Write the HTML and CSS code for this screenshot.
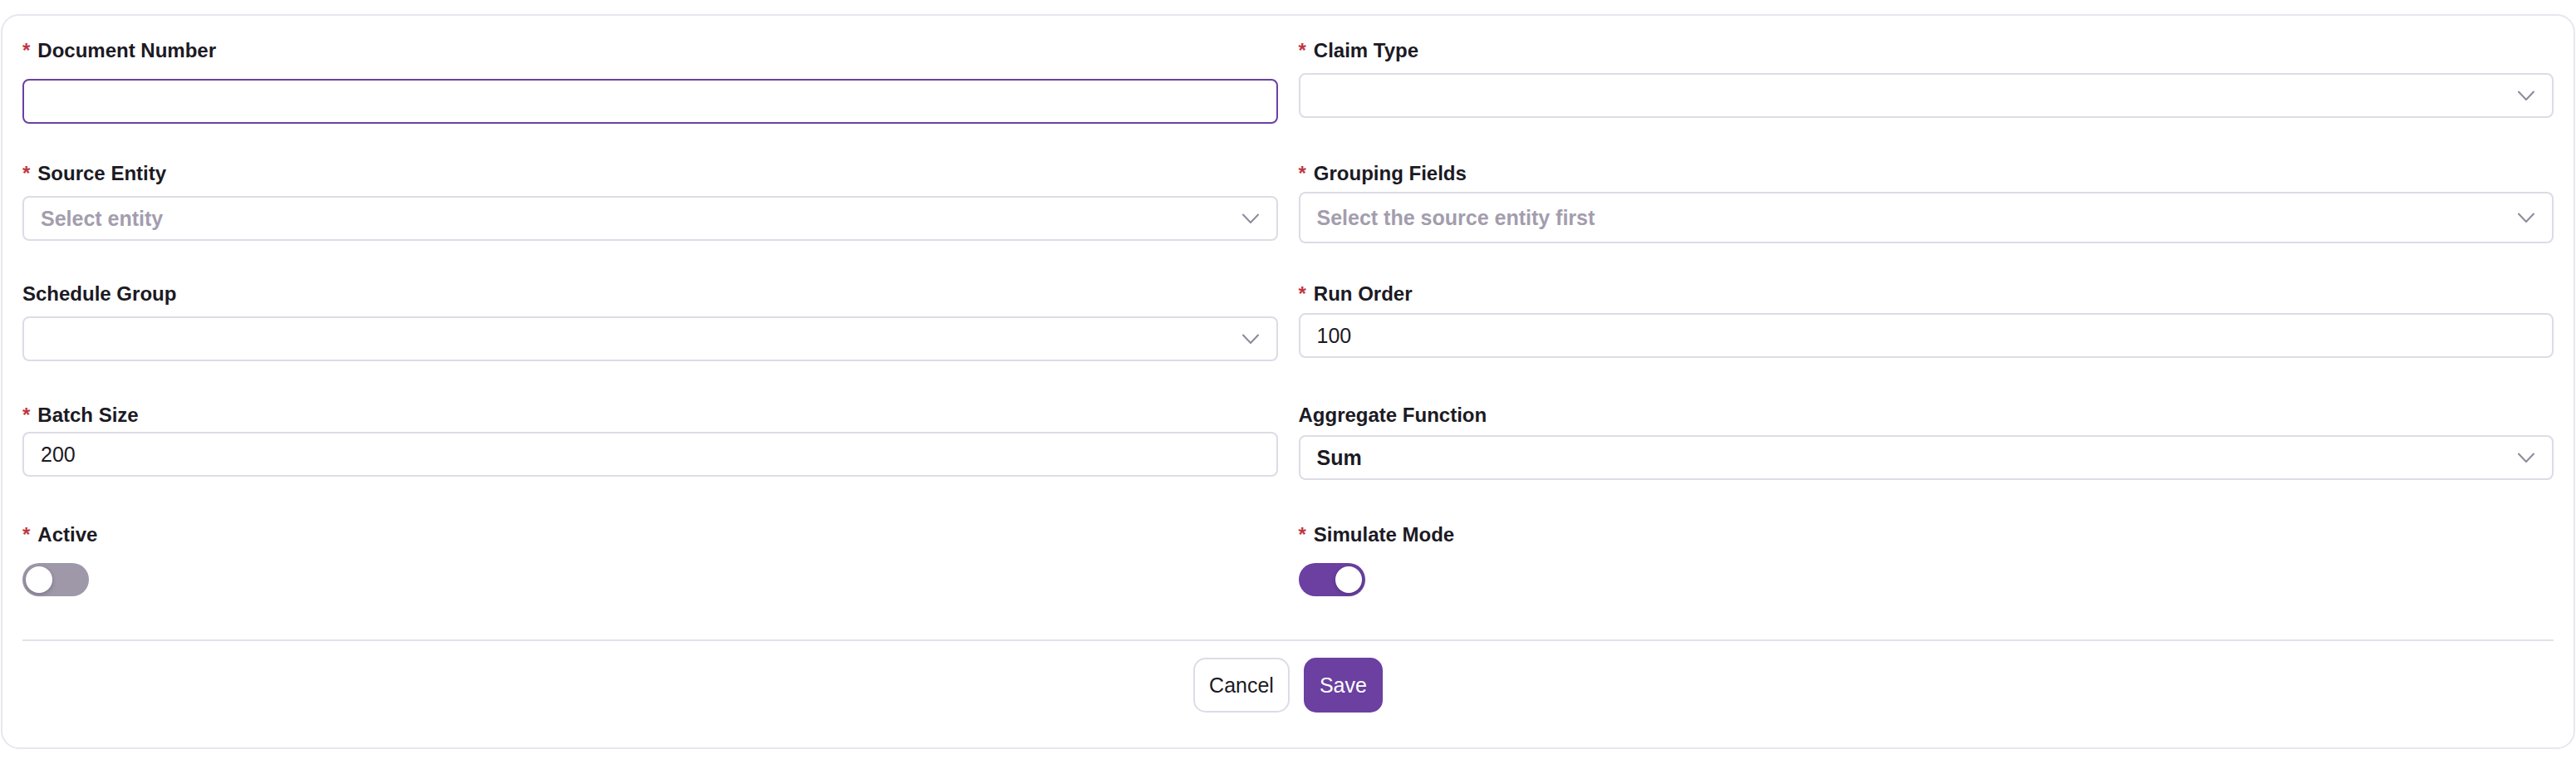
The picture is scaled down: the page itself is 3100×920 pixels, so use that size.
FILE: index.html
```html
<!DOCTYPE html>
<html lang="en">
<head>
<meta charset="utf-8">
<title>Form</title>
<link rel="stylesheet" href="styles.css">
</head>
<body>
<div class="page">
  <form class="card">
    <div class="form-grid">
      <div class="field">
        <div class="label"><span class="req">*</span>Document Number</div>
        <div class="control input focused"></div>
      </div>
      <div class="field">
        <div class="label"><span class="req">*</span>Claim Type</div>
        <div class="control select"><span class="value"></span><svg class="chev" viewBox="0 0 20 13" width="20" height="13"><polyline points="1,1.5 10,11 19,1.5"/></svg></div>
      </div>

      <div class="field">
        <div class="label"><span class="req">*</span>Source Entity</div>
        <div class="control select"><span class="placeholder">Select entity</span><svg class="chev" viewBox="0 0 20 13" width="20" height="13"><polyline points="1,1.5 10,11 19,1.5"/></svg></div>
      </div>
      <div class="field">
        <div class="label"><span class="req">*</span>Grouping Fields</div>
        <div class="control select multi"><span class="placeholder">Select the source entity first</span><svg class="chev" viewBox="0 0 20 13" width="20" height="13"><polyline points="1,1.5 10,11 19,1.5"/></svg></div>
      </div>

      <div class="field">
        <div class="label">Schedule Group</div>
        <div class="control select"><span class="value"></span><svg class="chev" viewBox="0 0 20 13" width="20" height="13"><polyline points="1,1.5 10,11 19,1.5"/></svg></div>
      </div>
      <div class="field">
        <div class="label"><span class="req">*</span>Run Order</div>
        <div class="control input">100</div>
      </div>

      <div class="field">
        <div class="label"><span class="req">*</span>Batch Size</div>
        <div class="control input low">200</div>
      </div>
      <div class="field">
        <div class="label">Aggregate Function</div>
        <div class="control select low"><span class="value strong">Sum</span><svg class="chev" viewBox="0 0 20 13" width="20" height="13"><polyline points="1,1.5 10,11 19,1.5"/></svg></div>
      </div>

      <div class="field">
        <div class="label"><span class="req">*</span>Active</div>
        <div class="switch"><span class="knob"></span></div>
      </div>
      <div class="field">
        <div class="label"><span class="req">*</span>Simulate Mode</div>
        <div class="switch on"><span class="knob"></span></div>
      </div>
    </div>

    <div class="divider"></div>

    <div class="actions">
      <button type="button" class="btn btn-default">Cancel</button>
      <button type="button" class="btn btn-primary">Save</button>
    </div>
  </form>
</div>
</body>
</html>
```

FILE: styles.css
```css
* { box-sizing: border-box; }

html, body {
  margin: 0;
  padding: 0;
  background: #ffffff;
}

body {
  font-family: "Liberation Sans", Arial, sans-serif;
  color: #1c1a24;
}

.page {
  padding: 17px 1px 0 1px;
}

.card {
  border: 2px solid #e8e6ee;
  border-radius: 22px;
  padding: 26px 24px 42px 24px;
  background: #ffffff;
}

.form-grid {
  display: grid;
  grid-template-columns: 1fr 1fr;
  column-gap: 25px;
  grid-template-rows: 148px 145px 146px 144px auto;
}

.field {
  display: flex;
  flex-direction: column;
  align-items: stretch;
}

.label {
  font-size: 24px;
  line-height: 32px;
  font-weight: 700;
  color: #1c1a24;
  white-space: nowrap;
}

.req {
  color: #c1363f;
  font-weight: 700;
  margin-right: 9px;
}

.control {
  height: 54px;
  border: 2px solid #dedbe7;
  border-radius: 8px;
  padding: 0 21px 0 20px;
  display: flex;
  align-items: center;
  font-size: 25px;
  color: #1c1a24;
  background: #ffffff;
}

.control.input { margin-top: 7px; }
.control.input.low { margin-top: 4px; }
.control.select { margin-top: 11px; justify-content: space-between; }
.control.select.low { margin-top: 8px; }
.control.focused {
  margin-top: 18px;
  border-color: #6b41a1;
}
.control.multi {
  height: 62px;
  margin-top: 6px;
}

.placeholder {
  color: #a39dae;
  font-weight: 700;
}

.value.strong { font-weight: 700; }

.chev {
  flex: none;
  fill: none;
  stroke: #8f899b;
  stroke-width: 2;
  stroke-linecap: round;
  stroke-linejoin: round;
}

.switch {
  margin-top: 18px;
  width: 80px;
  height: 40px;
  border-radius: 20px;
  background: #9e98a9;
  padding: 4px;
  display: flex;
  justify-content: flex-start;
}

.switch.on {
  background: #6b40a0;
  justify-content: flex-end;
}

.knob {
  width: 32px;
  height: 32px;
  border-radius: 50%;
  background: #ffffff;
  box-shadow: 0 2px 5px rgba(30, 20, 50, 0.28);
}

.divider {
  margin-top: 52px;
  height: 2px;
  background: #e3e1ec;
}

.actions {
  display: flex;
  justify-content: center;
  gap: 17px;
  padding-top: 20px;
}

.btn {
  height: 66px;
  padding: 0 17px;
  border-radius: 15px;
  font-family: "Liberation Sans", Arial, sans-serif;
  font-size: 25px;
  border: 2px solid #dedbe7;
  cursor: pointer;
}

.btn-default {
  background: #ffffff;
  color: #1c1a24;
}

.btn-primary {
  background: #6b40a0;
  border-color: #6b40a0;
  color: #ffffff;
}
```
